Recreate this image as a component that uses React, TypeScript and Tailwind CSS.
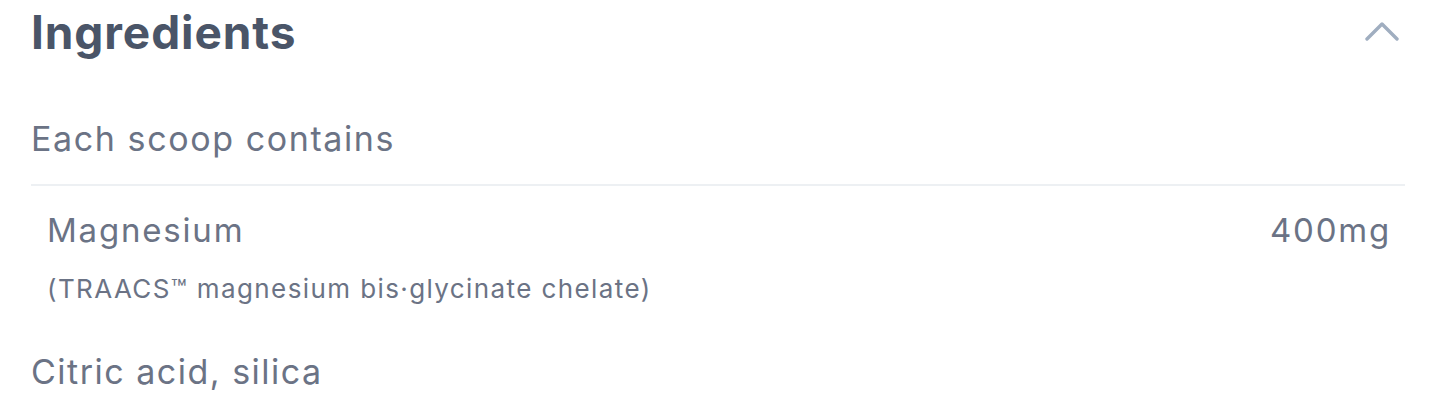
import React from "react";

export default function App() {
  return (
    <div className="w-[1432px] h-[414px] bg-white overflow-hidden" style={{ fontFamily: '"Inter", "Open Sans", sans-serif' }}>
      <div className="pl-[31px] pr-[27px]">
        <div className="flex items-center justify-between h-[64px]">
          <h2 className="text-[46px] font-bold text-[#4a5568] leading-none tracking-[0.9px]">Ingredients</h2>
          <svg width="34" height="20" viewBox="0 0 34 20" className="mr-[6px] mt-[-2px]">
            <path d="M2 18 L17 3 L32 18" fill="none" stroke="#a0aec0" strokeWidth="3.4" strokeLinecap="round" strokeLinejoin="round" />
          </svg>
        </div>
        <div className="h-[122px] flex items-center border-b-2 border-[#edf0f3] pt-[30px]">
          <p className="text-[34px] text-[#6b7385] leading-none tracking-[1.6px]">Each scoop contains</p>
        </div>
        <div className="px-[16px] pt-[24px]">
          <div className="flex justify-between items-center h-[40px]">
            <span className="text-[33px] text-[#6b7385] leading-none tracking-[1.8px]">Magnesium</span>
            <span className="text-[33px] text-[#6b7385] leading-none tracking-[1.8px] mr-[-2px]">400mg</span>
          </div>
          <div className="mt-[24px] h-[30px] flex items-center">
            <span className="text-[26px] text-[#6b7385] leading-none tracking-[1.4px]">(TRAACS™ magnesium bis·glycinate chelate)</span>
          </div>
        </div>
        <div className="mt-[48px] h-[40px] flex items-center">
          <p className="text-[34px] text-[#6b7385] leading-none tracking-[1.5px]">Citric acid, silica</p>
        </div>
      </div>
    </div>
  );
}
